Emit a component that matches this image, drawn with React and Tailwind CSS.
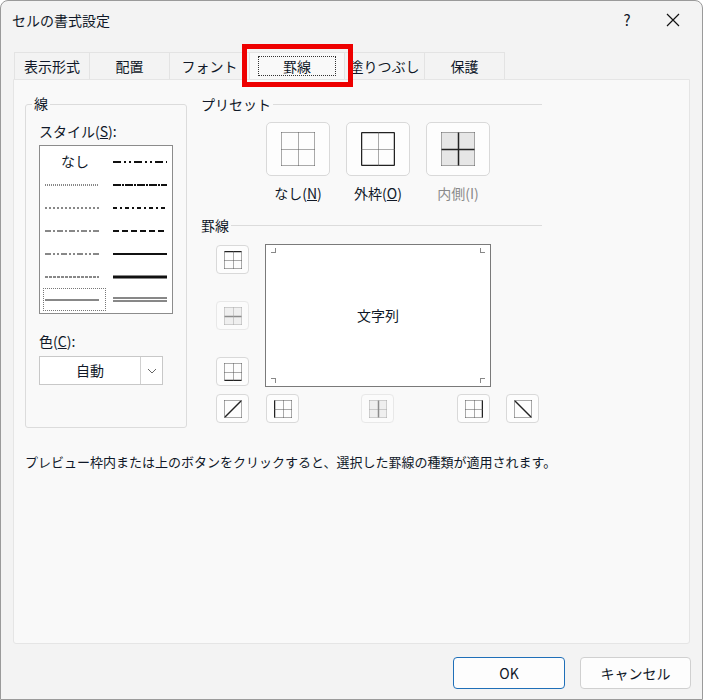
import React from 'react';

const font = { fontFamily: '"Noto Sans CJK JP", "Noto Sans", sans-serif' };

const tabs = ['表示形式', '配置', 'フォント', '罫線', '塗りつぶし', '保護'];

// line style samples: [dasharray, width, double]
const leftStyles = [null, ['1 1', 1], ['2 2', 1], ['6 2 2 2', 1], ['6 2 2 2 2 2', 1], ['3 1', 1], ['', 1]];
const rightStyles = [['8 3 2 3 2 3', 2], ['8 1 2 1', 2], ['4 3 2 3', 2], ['6 3', 2], ['', 2], ['', 3], ['', 1, true]];

const Sample = ({ s }) => {
  if (!s) return <span className="text-[14px] text-gray-900 pl-[16px]">なし</span>;
  const [dash, w, dbl] = s;
  return (
    <svg width="54" height="8" className="block">
      {dbl ? (
        <>
          <line x1="0" y1="2" x2="54" y2="2" stroke="#111" strokeWidth="1" />
          <line x1="0" y1="5" x2="54" y2="5" stroke="#111" strokeWidth="1" />
        </>
      ) : (
        <line x1="0" y1="4" x2="54" y2="4" stroke="#111" strokeWidth={w} strokeDasharray={dash || undefined} />
      )}
    </svg>
  );
};

// small border icon; solid: list of sides
const BorderIcon = ({ size = 18, solid = [], shade = false, diag }) => {
  const s = size, h = Math.floor(s / 2) + 0.5;
  const dot = { stroke: '#555', strokeWidth: 1, strokeDasharray: '1 1' };
  const sol = { stroke: '#222', strokeWidth: 1.5 };
  const side = (k) => (solid.includes(k) ? sol : dot);
  return (
    <svg width={s} height={s} viewBox={`0 0 ${s} ${s}`}>
      {shade && <rect x="0.5" y="0.5" width={s - 1} height={s - 1} fill="#e6e6e6" />}
      <line x1="0.5" y1="0.5" x2={s - 0.5} y2="0.5" {...side('t')} />
      <line x1="0.5" y1={s - 0.5} x2={s - 0.5} y2={s - 0.5} {...side('b')} />
      <line x1="0.5" y1="0.5" x2="0.5" y2={s - 0.5} {...side('l')} />
      <line x1={s - 0.5} y1="0.5" x2={s - 0.5} y2={s - 0.5} {...side('r')} />
      {diag === 'up' && <line x1="1" y1={s - 1} x2={s - 1} y2="1" {...sol} />}
      {diag === 'down' && <line x1="1" y1="1" x2={s - 1} y2={s - 1} {...sol} />}
      {!diag && (
        <>
          <line x1="0.5" y1={h} x2={s - 0.5} y2={h} {...side('h')} />
          <line x1={h} y1="0.5" x2={h} y2={s - 0.5} {...side('v')} />
        </>
      )}
    </svg>
  );
};

const SmallBtn = ({ children, disabled }) => (
  <div className={`w-[33px] h-[29px] rounded-[4px] border border-[#d9d9d9] bg-[#fdfdfd] flex items-center justify-center ${disabled ? 'opacity-50' : ''}`}>
    {children}
  </div>
);

const PresetBtn = ({ children, label, disabled }) => (
  <div className="flex flex-col items-center w-[64px]">
    <div className="w-[64px] h-[54px] rounded-[5px] border border-[#d9d9d9] bg-[#fdfdfd] flex items-center justify-center">
      {children}
    </div>
    <div className={`mt-[7px] text-[14px] whitespace-nowrap ${disabled ? 'text-[#8a8a8a]' : 'text-gray-900'}`}>{label}</div>
  </div>
);

export default function App() {
  return (
    <div style={font} className="w-[703px] h-[700px] bg-[#f3f3f3] flex flex-col border border-[#9a9a9a] rounded-t-[8px] overflow-hidden">
      {/* title bar */}
      <div className="h-[38px] flex items-center pl-[11px] text-[14px] text-gray-900">
        <span className="flex-1 pt-[1px]">セルの書式設定</span>
        <span className="w-[46px] text-center text-[15px]">?</span>
        <span className="w-[46px] flex justify-center mr-[6px]">
          <svg width="14" height="14"><path d="M1 1L13 13M13 1L1 13" stroke="#111" strokeWidth="1.2" /></svg>
        </span>
      </div>

      {/* tabs */}
      <div className="flex pl-[13px] mt-[13px] h-[27px] items-end">
        {tabs.map((t, i) => (
          <div
            key={t}
            className={`h-[27px] flex items-center justify-center text-[14px] text-gray-900 border-t border-r border-[#e3e3e3] ${i === 0 ? 'border-l' : ''} ${i === 3 ? 'bg-[#f9f9f9] outline-[5px] outline-[#ee0000] outline-offset-[3px] relative z-10' : 'bg-[#f3f3f3]'}`}
            style={{ width: [76, 80, 80, 95, 80, 80][i] }}
          >
            {i === 3 ? (
              <span className="border border-dotted border-[#333] px-[24px] leading-[18px]">{t}</span>
            ) : t}
          </div>
        ))}
      </div>

      {/* content panel */}
      <div className="mx-[12px] h-[565px] bg-[#f9f9f9] border border-[#e5e5e5] rounded-b-[3px] px-[11px] pt-[14px] text-[14px] text-gray-900">
        <div className="flex">
          {/* 線 group */}
          <div className="relative w-[162px] h-[324px] border border-[#dcdcdc] rounded-[3px] mt-[10px] px-[13px]">
            <span className="absolute -top-[12px] left-[6px] bg-[#f9f9f9] px-[2px]">線</span>
            <div className="mt-[16px]">スタイル(<u>S</u>):</div>
            <div className="mt-[3px] w-[134px] h-[169px] bg-white border border-[#8c8c8c] grid grid-cols-2 pt-[4px] px-[3px]">
              <div className="flex flex-col">
                {leftStyles.map((s, i) => (
                  <div key={i} className={`h-[23px] flex items-center ${i === 6 ? 'border border-dotted border-[#777] px-[1px]' : 'px-[2px]'}`}>
                    <Sample s={s} />
                  </div>
                ))}
              </div>
              <div className="flex flex-col pl-[7px]">
                {rightStyles.map((s, i) => (
                  <div key={i} className="h-[23px] flex items-center"><Sample s={s} /></div>
                ))}
              </div>
            </div>
            <div className="mt-[17px]">色(<u>C</u>):</div>
            <div className="mt-[4px] w-[124px] h-[29px] bg-white border border-[#c8c8c8] flex">
              <div className="flex-1 flex items-center justify-center">自動</div>
              <div className="w-[22px] border-l border-[#d0d0d0] flex items-center justify-center">
                <svg width="10" height="6"><path d="M1 1L5 5L9 1" stroke="#666" fill="none" /></svg>
              </div>
            </div>
          </div>

          {/* right side */}
          <div className="ml-[14px] w-[341px]">
            <div className="flex items-center gap-[2px]">
              <span>プリセット</span>
              <div className="flex-1 h-px bg-[#dcdcdc]" />
            </div>
            <div className="flex gap-[16px] ml-[65px] mt-[7px]">
              <PresetBtn label={<>なし(<u>N</u>)</>}><BorderIcon size={34} /></PresetBtn>
              <PresetBtn label={<>外枠(<u>O</u>)</>}><BorderIcon size={34} solid={['t', 'b', 'l', 'r']} /></PresetBtn>
              <PresetBtn label="内側(I)" disabled><BorderIcon size={34} solid={['h', 'v']} shade /></PresetBtn>
            </div>
            <div className="flex items-center gap-[2px] mt-[11px]">
              <span>罫線</span>
              <div className="flex-1 h-px bg-[#dcdcdc]" />
            </div>
            <div className="flex mt-[8px] ml-[15px]">
              <div className="flex flex-col justify-between h-[141px] mt-[1px]">
                <SmallBtn><BorderIcon solid={['t']} /></SmallBtn>
                <SmallBtn disabled><BorderIcon solid={['h']} shade /></SmallBtn>
                <SmallBtn><BorderIcon solid={['b']} /></SmallBtn>
              </div>
              <div className="ml-[16px] w-[226px] h-[143px] bg-white border border-[#7a7a7a] relative flex items-center justify-center">
                <span className="absolute top-[3px] left-[5px] w-[5px] h-[5px] border-r border-b border-[#888]" />
                <span className="absolute top-[3px] right-[5px] w-[5px] h-[5px] border-l border-b border-[#888]" />
                <span className="absolute bottom-[3px] left-[5px] w-[5px] h-[5px] border-r border-t border-[#888]" />
                <span className="absolute bottom-[3px] right-[5px] w-[5px] h-[5px] border-l border-t border-[#888]" />
                <span className="text-[14px]">文字列</span>
              </div>
            </div>
            <div className="flex ml-[15px] mt-[7px]">
              <SmallBtn><BorderIcon diag="up" /></SmallBtn>
              <div className="ml-[17px]"><SmallBtn><BorderIcon solid={['l']} /></SmallBtn></div>
              <div className="ml-[62px]"><SmallBtn disabled><BorderIcon solid={['v']} shade /></SmallBtn></div>
              <div className="ml-[63px]"><SmallBtn><BorderIcon solid={['r']} /></SmallBtn></div>
              <div className="ml-[16px]"><SmallBtn><BorderIcon diag="down" /></SmallBtn></div>
            </div>
          </div>
        </div>
        <div className="mt-[24px] text-[13px]">プレビュー枠内または上のボタンをクリックすると、選択した罫線の種類が適用されます。</div>
      </div>

      {/* footer buttons */}
      <div className="flex justify-end gap-[15px] pr-[11px] mt-[13px] text-[14px] text-gray-900">
        <div className="w-[112px] h-[32px] rounded-[4px] border border-[#1f6fb8] bg-[#fdfdfd] flex items-center justify-center">OK</div>
        <div className="w-[111px] h-[32px] rounded-[4px] border border-[#d0d0d0] bg-[#fdfdfd] flex items-center justify-center">キャンセル</div>
      </div>
    </div>
  );
}
